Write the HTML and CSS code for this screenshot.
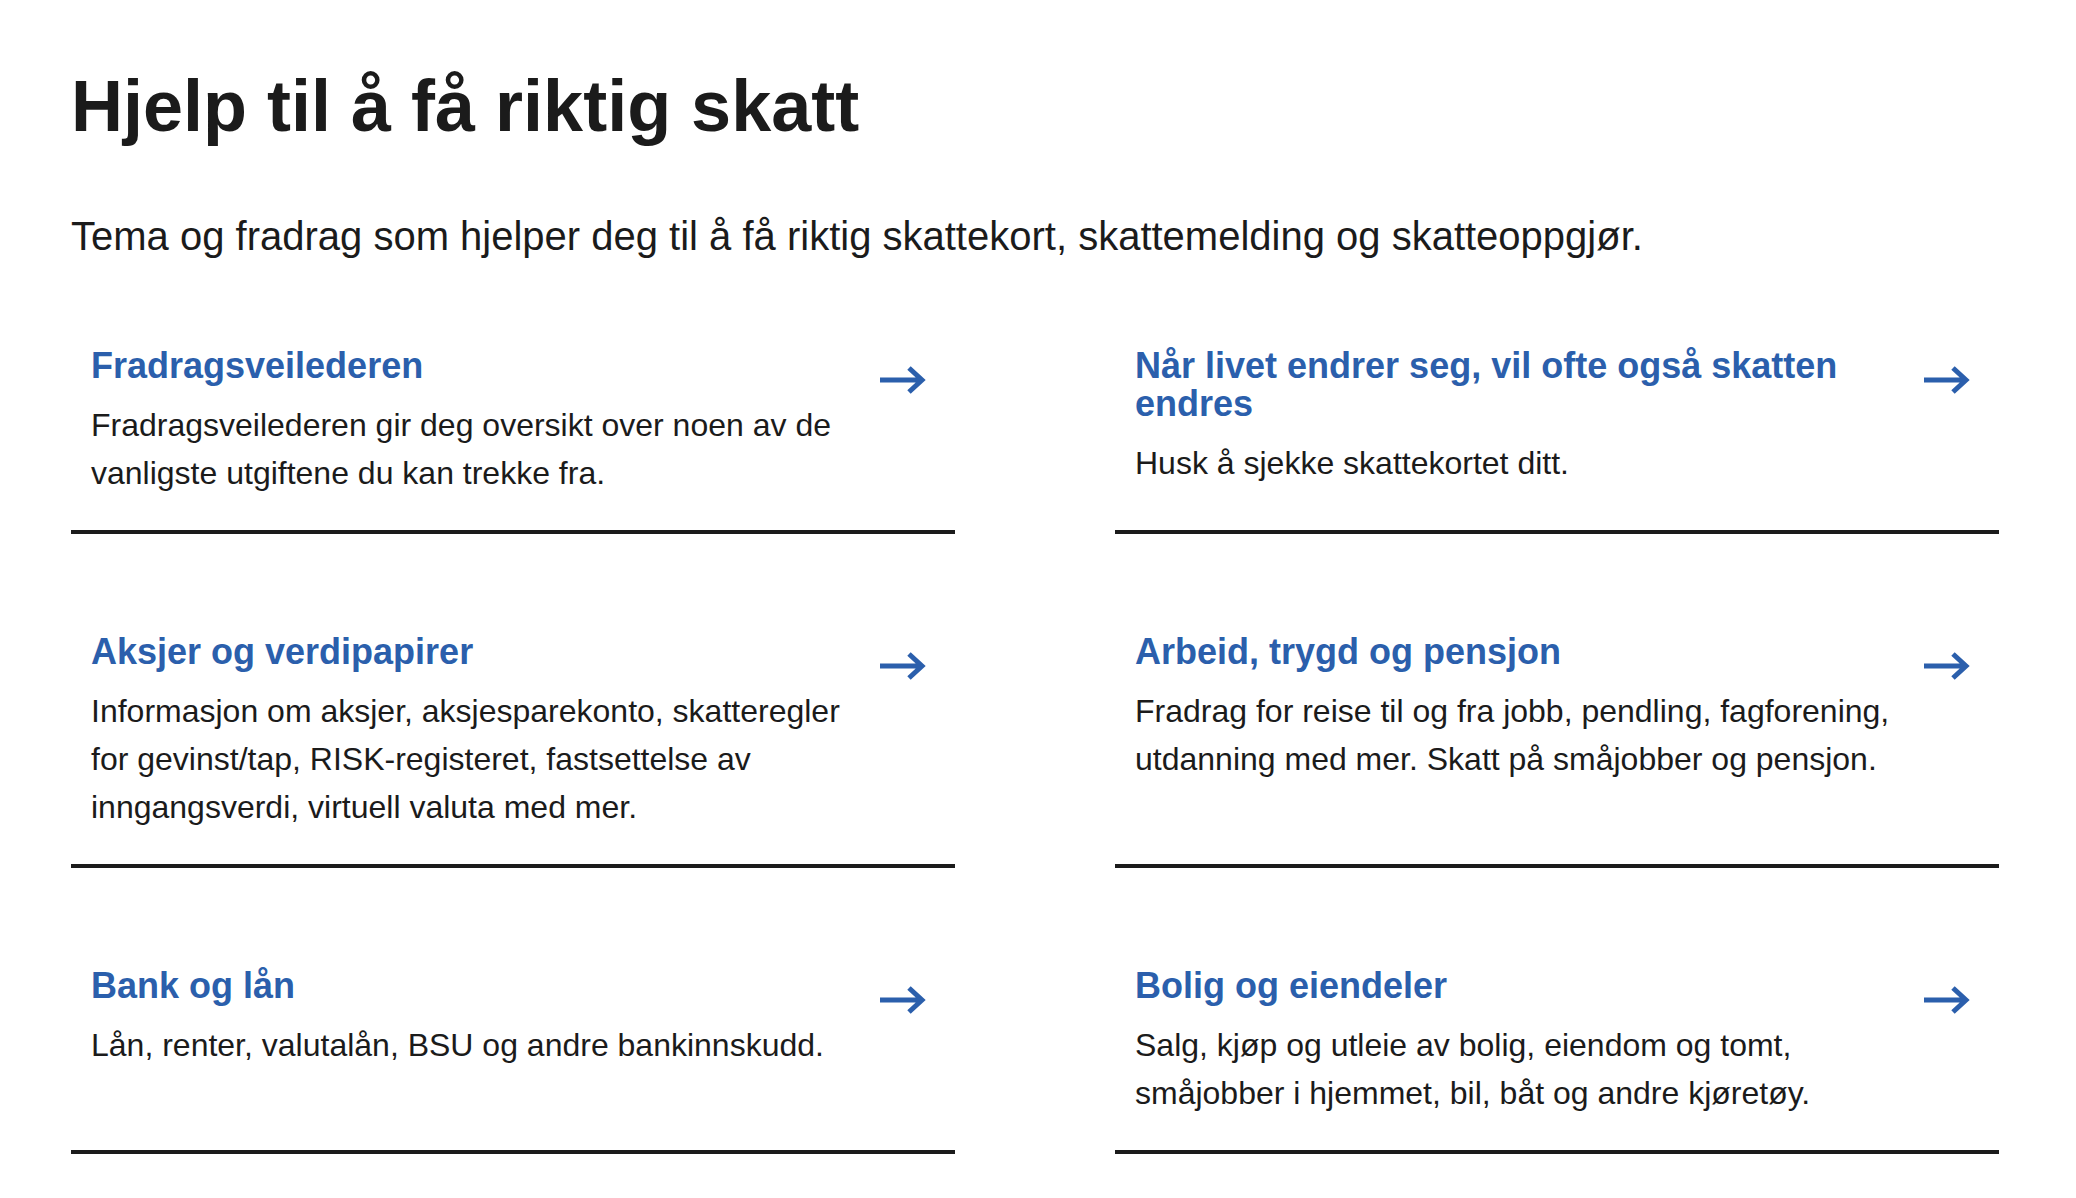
FILE: index.html
```html
<!DOCTYPE html>
<html lang="nb">
<head>
  <meta charset="utf-8">
  <meta name="viewport" content="width=device-width, initial-scale=1">
  <title>Hjelp til å få riktig skatt</title>
  <link rel="stylesheet" href="styles.css">
</head>
<body>
  <main class="page">
    <h1 class="page-title">Hjelp til å få riktig skatt</h1>
    <p class="lead">Tema og fradrag som hjelper deg til å få riktig skattekort, skattemelding og skatteoppgjør.</p>

    <ul class="topics">
      <li>
        <a class="topic" href="#fradragsveilederen">
          <div class="topic-text">
            <h2 class="topic-title">Fradragsveilederen</h2>
            <p class="topic-description">Fradragsveilederen gir deg oversikt over noen av de vanligste utgiftene du kan trekke fra.</p>
          </div>
          <svg class="arrow" viewBox="0 0 46 28" aria-hidden="true"><path d="M0 14H42M29 2L42 14L29 26"/></svg>
        </a>
      </li>
      <li>
        <a class="topic" href="#livet-endrer-seg">
          <div class="topic-text">
            <h2 class="topic-title">Når livet endrer seg, vil ofte også skatten endres</h2>
            <p class="topic-description">Husk å sjekke skattekortet ditt.</p>
          </div>
          <svg class="arrow" viewBox="0 0 46 28" aria-hidden="true"><path d="M0 14H42M29 2L42 14L29 26"/></svg>
        </a>
      </li>
      <li>
        <a class="topic" href="#aksjer">
          <div class="topic-text">
            <h2 class="topic-title">Aksjer og verdipapirer</h2>
            <p class="topic-description">Informasjon om aksjer, aksjesparekonto, skatteregler for gevinst/tap, RISK-registeret, fastsettelse av inngangsverdi, virtuell valuta med mer.</p>
          </div>
          <svg class="arrow" viewBox="0 0 46 28" aria-hidden="true"><path d="M0 14H42M29 2L42 14L29 26"/></svg>
        </a>
      </li>
      <li>
        <a class="topic" href="#arbeid">
          <div class="topic-text">
            <h2 class="topic-title">Arbeid, trygd og pensjon</h2>
            <p class="topic-description">Fradrag for reise til og fra jobb, pendling, fagforening, utdanning med mer. Skatt på småjobber og pensjon.</p>
          </div>
          <svg class="arrow" viewBox="0 0 46 28" aria-hidden="true"><path d="M0 14H42M29 2L42 14L29 26"/></svg>
        </a>
      </li>
      <li>
        <a class="topic" href="#bank">
          <div class="topic-text">
            <h2 class="topic-title">Bank og lån</h2>
            <p class="topic-description">Lån, renter, valutalån, BSU og andre bankinnskudd.</p>
          </div>
          <svg class="arrow" viewBox="0 0 46 28" aria-hidden="true"><path d="M0 14H42M29 2L42 14L29 26"/></svg>
        </a>
      </li>
      <li>
        <a class="topic" href="#bolig">
          <div class="topic-text">
            <h2 class="topic-title">Bolig og eiendeler</h2>
            <p class="topic-description">Salg, kjøp og utleie av bolig, eiendom og tomt, småjobber i hjemmet, bil, båt og andre kjøretøy.</p>
          </div>
          <svg class="arrow" viewBox="0 0 46 28" aria-hidden="true"><path d="M0 14H42M29 2L42 14L29 26"/></svg>
        </a>
      </li>
    </ul>
  </main>
</body>
</html>
```
FILE: styles.css
```css
* {
  box-sizing: border-box;
}

body {
  margin: 0;
  background: #fff;
  color: #1b1b1b;
  font-family: "Liberation Sans", Arial, sans-serif;
}

h1,
h2,
p,
ul {
  margin: 0;
  padding: 0;
}

.page {
  padding: 66px 77px 44px 71px;
}

.page-title {
  margin-bottom: 62px;
  font-size: 72px;
  line-height: 80px;
}

.lead {
  margin-bottom: 64px;
  font-size: 40px;
  line-height: 56px;
}

.topics {
  display: grid;
  grid-template-columns: 1fr 1fr;
  gap: 80px 160px;
  list-style: none;
}

.topics li {
  display: grid;
}

.topic {
  display: flex;
  align-items: flex-start;
  justify-content: space-between;
  gap: 32px;
  padding: 19px 29px 33px 20px;
  border-bottom: 4px solid #1b1b1b;
  color: inherit;
  text-decoration: none;
}

.topic-title {
  margin-bottom: 16px;
  color: #2b5fac;
  font-size: 36px;
  line-height: 38px;
}

.topic:hover .topic-title {
  text-decoration: underline;
}

.topic-description {
  font-size: 32px;
  line-height: 48px;
}

.arrow {
  flex: none;
  width: 46px;
  height: 28px;
  margin-top: 19px;
  fill: none;
  stroke: #2b5fac;
  stroke-width: 5;
}
```
